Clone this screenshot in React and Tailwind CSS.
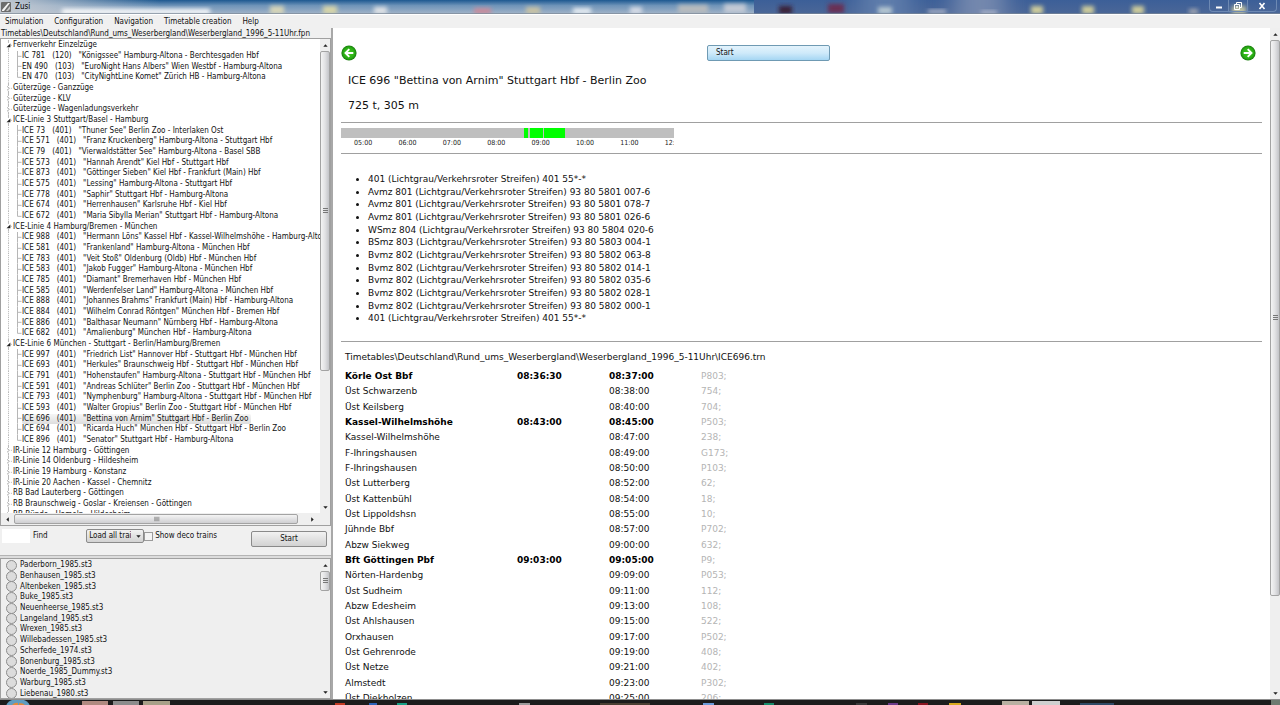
import React from 'react';

const menuItems = ['Simulation', 'Configuration', 'Navigation', 'Timetable creation', 'Help'];

const treeGroups = [
  {
    name: 'Fernverkehr Einzelzüge',
    trains: [
      'IC 781  (120)  "Königssee" Hamburg-Altona - Berchtesgaden Hbf',
      'EN 490  (103)  "EuroNight Hans Albers" Wien Westbf - Hamburg-Altona',
      'EN 470  (103)  "CityNightLine Komet" Zürich HB - Hamburg-Altona',
    ],
  },
  { name: 'Güterzüge - Ganzzüge', trains: [] },
  { name: 'Güterzüge - KLV', trains: [] },
  { name: 'Güterzüge - Wagenladungsverkehr', trains: [] },
  {
    name: 'ICE-Linie 3 Stuttgart/Basel - Hamburg',
    trains: [
      'ICE 73  (401)  "Thuner See" Berlin Zoo - Interlaken Ost',
      'ICE 571  (401)  "Franz Kruckenberg" Hamburg-Altona - Stuttgart Hbf',
      'ICE 79  (401)  "Vierwaldstätter See" Hamburg-Altona - Basel SBB',
      'ICE 573  (401)  "Hannah Arendt" Kiel Hbf - Stuttgart Hbf',
      'ICE 873  (401)  "Göttinger Sieben" Kiel Hbf - Frankfurt (Main) Hbf',
      'ICE 575  (401)  "Lessing" Hamburg-Altona - Stuttgart Hbf',
      'ICE 778  (401)  "Saphir" Stuttgart Hbf - Hamburg-Altona',
      'ICE 674  (401)  "Herrenhausen" Karlsruhe Hbf - Kiel Hbf',
      'ICE 672  (401)  "Maria Sibylla Merian" Stuttgart Hbf - Hamburg-Altona',
    ],
  },
  {
    name: 'ICE-Linie 4 Hamburg/Bremen - München',
    trains: [
      'ICE 988  (401)  "Hermann Löns" Kassel Hbf - Kassel-Wilhelmshöhe - Hamburg-Altona',
      'ICE 581  (401)  "Frankenland" Hamburg-Altona - München Hbf',
      'ICE 783  (401)  "Veit Stoß" Oldenburg (Oldb) Hbf - München Hbf',
      'ICE 583  (401)  "Jakob Fugger" Hamburg-Altona - München Hbf',
      'ICE 785  (401)  "Diamant" Bremerhaven Hbf - München Hbf',
      'ICE 585  (401)  "Werdenfelser Land" Hamburg-Altona - München Hbf',
      'ICE 888  (401)  "Johannes Brahms" Frankfurt (Main) Hbf - Hamburg-Altona',
      'ICE 884  (401)  "Wilhelm Conrad Röntgen" München Hbf - Bremen Hbf',
      'ICE 886  (401)  "Balthasar Neumann" Nürnberg Hbf - Hamburg-Altona',
      'ICE 682  (401)  "Amalienburg" München Hbf - Hamburg-Altona',
    ],
  },
  {
    name: 'ICE-Linie 6 München - Stuttgart - Berlin/Hamburg/Bremen',
    trains: [
      'ICE 997  (401)  "Friedrich List" Hannover Hbf - Stuttgart Hbf - München Hbf',
      'ICE 693  (401)  "Herkules" Braunschweig Hbf - Stuttgart Hbf - München Hbf',
      'ICE 791  (401)  "Hohenstaufen" Hamburg-Altona - Stuttgart Hbf - München Hbf',
      'ICE 591  (401)  "Andreas Schlüter" Berlin Zoo - Stuttgart Hbf - München Hbf',
      'ICE 793  (401)  "Nymphenburg" Hamburg-Altona - Stuttgart Hbf - München Hbf',
      'ICE 593  (401)  "Walter Gropius" Berlin Zoo - Stuttgart Hbf - München Hbf',
      'ICE 696  (401)  "Bettina von Arnim" Stuttgart Hbf - Berlin Zoo',
      'ICE 694  (401)  "Ricarda Huch" München Hbf - Stuttgart Hbf - Berlin Zoo',
      'ICE 896  (401)  "Senator" Stuttgart Hbf - Hamburg-Altona',
    ],
  },
  { name: 'IR-Linie 12 Hamburg - Göttingen', trains: [] },
  { name: 'IR-Linie 14 Oldenburg - Hildesheim', trains: [] },
  { name: 'IR-Linie 19 Hamburg - Konstanz', trains: [] },
  { name: 'IR-Linie 20 Aachen - Kassel - Chemnitz', trains: [] },
  { name: 'RB Bad Lauterberg - Göttingen', trains: [] },
  { name: 'RB Braunschweig - Goslar - Kreiensen - Göttingen', trains: [] },
  { name: 'RB Bünde - Hameln - Hildesheim', trains: [] },
];

// flat list, one entry per visible tree row
const treeRows = treeGroups.flatMap((group) => [
  { label: group.name, open: group.trains.length > 0, level: 0 },
  ...group.trains.map((train, i) => ({
    label: train,
    level: 1,
    last: i === group.trains.length - 1,
    selected: train.startsWith('ICE 696'),
  })),
]);

const modules = [
  'Paderborn_1985.st3',
  'Benhausen_1985.st3',
  'Altenbeken_1985.st3',
  'Buke_1985.st3',
  'Neuenheerse_1985.st3',
  'Langeland_1985.st3',
  'Wrexen_1985.st3',
  'Willebadessen_1985.st3',
  'Scherfede_1974.st3',
  'Bonenburg_1985.st3',
  'Noerde_1985_Dummy.st3',
  'Warburg_1985.st3',
  'Liebenau_1980.st3',
];

const hours = ['05:00', '06:00', '07:00', '08:00', '09:00', '10:00', '11:00', '12:00'];

// percent of the axis
const runs = [
  { from: 55, to: 56.3 },
  { from: 56.7, to: 60.7 },
  { from: 61.1, to: 67.2 },
];

const vehicles = [
  '401 (Lichtgrau/Verkehrsroter Streifen) 401 55*-*',
  'Avmz 801 (Lichtgrau/Verkehrsroter Streifen) 93 80 5801 007-6',
  'Avmz 801 (Lichtgrau/Verkehrsroter Streifen) 93 80 5801 078-7',
  'Avmz 801 (Lichtgrau/Verkehrsroter Streifen) 93 80 5801 026-6',
  'WSmz 804 (Lichtgrau/Verkehrsroter Streifen) 93 80 5804 020-6',
  'BSmz 803 (Lichtgrau/Verkehrsroter Streifen) 93 80 5803 004-1',
  'Bvmz 802 (Lichtgrau/Verkehrsroter Streifen) 93 80 5802 063-8',
  'Bvmz 802 (Lichtgrau/Verkehrsroter Streifen) 93 80 5802 014-1',
  'Bvmz 802 (Lichtgrau/Verkehrsroter Streifen) 93 80 5802 035-6',
  'Bvmz 802 (Lichtgrau/Verkehrsroter Streifen) 93 80 5802 028-1',
  'Bvmz 802 (Lichtgrau/Verkehrsroter Streifen) 93 80 5802 000-1',
  '401 (Lichtgrau/Verkehrsroter Streifen) 401 55*-*',
];

const stops = [
  ['Körle Ost Bbf', '08:36:30', '08:37:00', 'P803;'],
  ['Üst Schwarzenb', '', '08:38:00', '754;'],
  ['Üst Keilsberg', '', '08:40:00', '704;'],
  ['Kassel-Wilhelmshöhe', '08:43:00', '08:45:00', 'P503;'],
  ['Kassel-Wilhelmshöhe', '', '08:47:00', '238;'],
  ['F-Ihringshausen', '', '08:49:00', 'G173;'],
  ['F-Ihringshausen', '', '08:50:00', 'P103;'],
  ['Üst Lutterberg', '', '08:52:00', '62;'],
  ['Üst Kattenbühl', '', '08:54:00', '18;'],
  ['Üst Lippoldshsn', '', '08:55:00', '10;'],
  ['Jühnde Bbf', '', '08:57:00', 'P702;'],
  ['Abzw Siekweg', '', '09:00:00', '632;'],
  ['Bft Göttingen Pbf', '09:03:00', '09:05:00', 'P9;'],
  ['Nörten-Hardenbg', '', '09:09:00', 'P053;'],
  ['Üst Sudheim', '', '09:11:00', '112;'],
  ['Abzw Edesheim', '', '09:13:00', '108;'],
  ['Üst Ahlshausen', '', '09:15:00', '522;'],
  ['Orxhausen', '', '09:17:00', 'P502;'],
  ['Üst Gehrenrode', '', '09:19:00', '408;'],
  ['Üst Netze', '', '09:21:00', '402;'],
  ['Almstedt', '', '09:23:00', 'P302;'],
  ['Üst Diekholzen', '', '09:25:00', '206;'],
];

// desktop icons shining through the glass title bar
const glassSpots = [
  { x: 62, w: 148, y: 9, h: 5, color: '#ffffff' },
  { x: 270, w: 14, y: 6, h: 8, color: '#d8d6b8' },
  { x: 323, w: 14, y: 6, h: 8, color: '#d8d6a8' },
  { x: 374, w: 13, y: 7, h: 7, color: '#e0e3e6' },
  { x: 474, w: 17, y: 8, h: 6, color: '#c98b9b' },
  { x: 526, w: 14, y: 7, h: 7, color: '#c9c3a4' },
  { x: 573, w: 18, y: 8, h: 6, color: '#e6edf3' },
  { x: 630, w: 12, y: 7, h: 7, color: '#d5dbe6' },
  { x: 678, w: 30, y: 5, h: 8, color: '#b9bcbd' },
  { x: 724, w: 22, y: 4, h: 9, color: '#c3cad5' },
  { x: 779, w: 13, y: 6, h: 8, color: '#3a2238' },
  { x: 828, w: 16, y: 4, h: 9, color: '#6b2f52' },
  { x: 878, w: 14, y: 7, h: 7, color: '#b7c8d2' },
  { x: 928, w: 18, y: 10, h: 3, color: '#c9cbd5' },
  { x: 981, w: 16, y: 11, h: 3, color: '#b9bfd0' },
  { x: 1031, w: 12, y: 6, h: 8, color: '#d0ce9b' },
  { x: 1082, w: 12, y: 6, h: 8, color: '#d0ce9b' },
  { x: 1132, w: 12, y: 6, h: 8, color: '#d0ce9b' },
  { x: 1189, w: 9, y: 9, h: 5, color: '#a5a9b2' },
  { x: 1232, w: 14, y: 6, h: 8, color: '#c6c6a2' },
];

const taskSpots = [
  { x: 335, w: 10, color: '#c23a22' },
  { x: 369, w: 8, color: '#2b62b8' },
  { x: 397, w: 10, color: '#16a085' },
  { x: 519, w: 11, color: '#9a9a9a' },
  { x: 600, w: 50, color: '#4a3f32' },
  { x: 703, w: 11, color: '#6a9ad8' },
  { x: 764, w: 10, color: '#168c6a' },
  { x: 856, w: 11, color: '#3a3a3a' },
  { x: 888, w: 10, color: '#6b3a8a' },
  { x: 918, w: 10, color: '#8a1420' },
  { x: 949, w: 12, color: '#d8a81c' },
  { x: 1080, w: 34, color: '#2f4a66' },
];

const TitleBar = () => (
  <header className="relative flex h-[14px] shrink-0 items-center justify-between overflow-hidden bg-[#45659a]">
    <svg className="absolute inset-0 h-full w-full" viewBox="0 0 1280 14" preserveAspectRatio="none" aria-hidden="true">
      <defs>
        <linearGradient id="glass" x1="0" x2="0" y1="0" y2="1">
          <stop offset="0" stopColor="#1d5890" />
          <stop offset="0.4" stopColor="#6f94b9" />
          <stop offset="1" stopColor="#a3b4c8" />
        </linearGradient>
        <linearGradient id="glassLeft" x1="0" x2="1">
          <stop offset="0" stopColor="#c5cbd3" />
          <stop offset="1" stopColor="#c5cbd3" stopOpacity="0" />
        </linearGradient>
        <linearGradient id="glassRight" x1="0" x2="0" y1="0" y2="1">
          <stop offset="0" stopColor="#3c5f98" />
          <stop offset="1" stopColor="#4b6797" />
        </linearGradient>
        <filter id="soft" x="-30%" y="-50%" width="160%" height="200%">
          <feGaussianBlur stdDeviation="2" />
        </filter>
        <filter id="softer" x="-50%" y="-50%" width="200%" height="200%">
          <feGaussianBlur stdDeviation="12 1" />
        </filter>
      </defs>
      <rect width="756" height="14" fill="url(#glass)" />
      <rect x="754" width="526" height="14" fill="url(#glassRight)" />
      <rect x="860" y="-6" width="50" height="26" fill="#5f7dab" filter="url(#softer)" />
      <rect x="955" y="-6" width="50" height="26" fill="#7488ae" filter="url(#softer)" />
      <rect width="160" height="14" fill="url(#glassLeft)" />
      {glassSpots.map((s) => (
        <rect key={s.x} x={s.x} y={s.y} width={s.w} height={s.h} fill={s.color} filter="url(#soft)" />
      ))}
      <path d="M0 13.500h1280" stroke="#7a8796" strokeOpacity="0.7" />
    </svg>
    <div className="relative flex items-center gap-1 pl-px">
      <svg width="10" height="10" viewBox="0 0 10 10" aria-hidden="true">
        <rect width="10" height="10" rx="1" fill="#6c6c6c" />
        <path d="M1 8 7 1h2L3 9H1z" fill="#f4f4f4" />
        <path d="M5 9 9 4v3L7 9z" fill="#c4c4c4" />
      </svg>
      <h1 className="text-[8px] leading-[12px] text-black">Zusi</h1>
    </div>
    <div className="relative flex h-[12px] self-start pr-[3px] text-white">
      <button aria-label="Minimize" className="flex w-[20px] items-center justify-center rounded-bl border border-t-0 border-[#6d89b3]">
        <svg width="8" height="10" viewBox="0 0 8 10"><path d="M1 6.500h6" stroke="currentColor" strokeWidth="2" /></svg>
      </button>
      <button aria-label="Restore" className="flex w-[18px] items-center justify-center border border-x-0 border-t-0 border-[#6d89b3]">
        <svg width="8" height="8" viewBox="0 0 8 8" fill="none" stroke="currentColor">
          <path d="M2.500 2V.5h5v5H6M.5 2.500h5v5h-5z" />
          <path d="M2.500 4.500h1v1h-1z" />
        </svg>
      </button>
      <button aria-label="Close" className="flex w-[30px] items-center justify-center rounded-br border border-t-0 border-[#6d89b3]">
        <svg width="8" height="8" viewBox="0 0 8 8"><path d="m1.500 1 5 6m0-6-5 6" stroke="currentColor" strokeWidth="1.600" /></svg>
      </button>
    </div>
  </header>
);

const Arrow = ({ className }) => (
  <svg className={className} width="5" height="5" viewBox="0 0 5 5" aria-hidden="true">
    <path d="M.3 3.800h4.400L2.500 1.300z" fill="#222" />
  </svg>
);

const Grip = ({ className }) => (
  <svg className={className} width="5" height="6" viewBox="0 0 5 6" aria-hidden="true">
    <path d="M0 .5h5M0 2.500h5M0 4.500h5" stroke="#777" />
  </svg>
);

// thumbClass sets how much of the track the thumb takes
const VerticalScrollbar = ({ thumbClass }) => (
  <div className="flex w-[10px] shrink-0 flex-col items-center bg-[#efefef]">
    <div className="flex h-[12px] w-full shrink-0 items-center justify-center">
      <Arrow />
    </div>
    <div className="flex min-h-0 w-full flex-1 flex-col">
      <div className={`flex w-full items-center justify-center rounded-xs border border-[#a3a3a3] bg-gradient-to-r from-[#f4f4f4] via-[#e2e2e4] to-[#c3c4c8] ${thumbClass}`}>
        <Grip />
      </div>
    </div>
    <div className="flex h-[12px] w-full shrink-0 items-center justify-center">
      <Arrow className="rotate-180" />
    </div>
  </div>
);

const TreeGuide = ({ row }) =>
  row.level === 1 ? (
    <svg className="h-full w-[21px] shrink-0" viewBox="0 0 21 11" preserveAspectRatio="none" fill="none" stroke="#b5b5b5" aria-hidden="true">
      <path d="M7.500 0v11" strokeDasharray="1 1" />
      <path d={row.last ? 'M16.500 0v5.500h4' : 'M16.500 0v11M16.500 5.500h4'} />
    </svg>
  ) : (
    <svg className="h-full w-[12px] shrink-0" viewBox="0 0 12 11" fill="none" aria-hidden="true">
      <path d="M7.500 0v3M7.500 8v3M10 5.500h1" stroke="#b5b5b5" />
      {row.open ? <path d="M5.500 7.500h4v-4z" fill="#222" /> : <path d="m6 3.500 2.500 2L6 7.500" stroke="#aaa" />}
    </svg>
  );

const TrainTree = () => (
  <div className="flex min-h-0 flex-1 flex-col border border-[#a0a0a0] bg-white">
    <div className="flex min-h-0 flex-1 overflow-hidden">
      <ul className="mt-px grid h-[480px] min-w-0 flex-1 auto-rows-fr self-start">
        {treeRows.map((row) => (
          <li key={row.label} className="flex min-h-0 items-center overflow-hidden">
            <TreeGuide row={row} />
            <span
              className={`flex gap-[7px] whitespace-nowrap leading-[10px] ${
                row.selected ? 'rounded-xs bg-gradient-to-b from-[#f6f6f6] to-[#dedede] pr-[3px]' : ''
              }`}
            >
              {row.label.split('  ').map((part) => (
                <span key={part}>{part}</span>
              ))}
            </span>
          </li>
        ))}
      </ul>
      <VerticalScrollbar thumbClass="h-[71%]" />
    </div>
    <div className="flex h-[12px] shrink-0 items-center bg-[#efefef] pr-[11px]">
      <Arrow className="mx-[4px] -rotate-90" />
      <div className="flex h-[10px] flex-1 items-center justify-center rounded-xs border border-[#a3a3a3] bg-gradient-to-b from-[#f4f4f4] to-[#cfcfd2]">
        <Grip className="rotate-90" />
      </div>
      <Arrow className="ml-[12px] mr-[4px] rotate-90" />
    </div>
  </div>
);

const SearchBar = () => (
  <div className="flex h-[29px] shrink-0 items-start pr-[4px] pt-[3px]">
    <input id="find" type="text" className="ml-[2px] h-[14px] w-[28px] bg-white px-1" />
    <label htmlFor="find" className="ml-[3px] leading-[14px]">Find</label>
    <div className="relative ml-auto">
      <select
        aria-label="Trains to load"
        className="h-[14px] w-[58px] appearance-none rounded-xs border border-[#8a8a8a] bg-gradient-to-b from-[#f2f2f2] to-[#d2d2d2] pl-[2px] pr-[12px]"
      >
        <option>Load all trai</option>
      </select>
      <Arrow className="pointer-events-none absolute right-[3px] top-[5px] rotate-180" />
    </div>
    <label className="flex h-[14px] items-center gap-[2px]">
      <input type="checkbox" className="h-[9px] w-[9px] appearance-none border border-[#9a9a9a] bg-[#f4f4f4]" />
      Show deco trains
    </label>
    <button className="ml-[34px] mt-[2px] h-[16px] w-[76px] rounded-xs border border-[#8a8a8a] bg-gradient-to-b from-[#f2f2f2] to-[#d2d2d2]">
      Start
    </button>
  </div>
);

const ModuleList = () => (
  <div className="flex h-[141px] shrink-0 overflow-hidden border border-[#a0a0a0] bg-[#efefef]">
    <ul className="mt-px grid h-[139px] flex-1 shrink-0 auto-rows-fr pl-[5px]">
      {modules.map((name) => (
        <li key={name} className="flex min-h-0 items-center gap-[3px]">
          <svg width="11" height="11" viewBox="0 0 11 11" className="shrink-0" aria-hidden="true">
            <circle cx="5.500" cy="5.500" r="5" fill="#dcdcdc" stroke="#8c8c8c" />
          </svg>
          <span className="leading-[10px]">{name}</span>
        </li>
      ))}
    </ul>
    <VerticalScrollbar thumbClass="h-[20px]" />
  </div>
);

const NavButton = ({ label, back }) => (
  <button aria-label={label}>
    <svg width="16" height="16" viewBox="0 0 16 16" className={back ? '' : 'rotate-180'}>
      <defs>
        <radialGradient id="orb" cx="0.5" cy="0.5" r="0.5">
          <stop offset="0" stopColor="#3ecb1c" />
          <stop offset="0.7" stopColor="#2bb015" />
          <stop offset="1" stopColor="#177a0d" />
        </radialGradient>
      </defs>
      <circle cx="8" cy="8" r="7.600" fill="url(#orb)" />
      <path d="M8.300 4.200 4.500 8l3.800 3.800M5 8h7.300" fill="none" stroke="#fff" strokeWidth="1.900" />
    </svg>
  </button>
);

const Timeline = () => (
  <div className="w-[333px] overflow-hidden">
    <div className="relative h-[10px] bg-[#bfbfbf]">
      {runs.map((run) => (
        <div
          key={run.from}
          className="absolute inset-y-0 bg-[#00ff00]"
          style={{ left: `${run.from}%`, width: `${run.to - run.from}%` }}
        />
      ))}
    </div>
    <div className="grid w-[355px] grid-cols-8 text-center font-['DejaVu_Sans_Condensed'] text-[7px] leading-[10px] text-[#222]">
      {hours.map((hour) => (
        <span key={hour}>{hour}</span>
      ))}
    </div>
  </div>
);

const TrainDetails = () => (
  <main className="flex min-w-0 flex-1 bg-white font-['DejaVu_Sans'] text-[9px] text-[#111]">
    <div className="min-w-0 flex-1 overflow-hidden pl-[8px] pr-[8px] pt-[17px]">
      <div className="flex items-center justify-between pr-[6px]">
        <NavButton label="Previous train" back />
        <button className="mr-[60px] h-[16px] w-[123px] rounded-xs border border-[#6f9ab3] bg-gradient-to-b from-[#e3f3fc] via-[#cfeafa] to-[#a5d6f3] pl-[8px] text-left font-['DejaVu_Sans_Condensed'] text-[8px] leading-[12px]">
          Start
        </button>
        <NavButton label="Next train" />
      </div>

      <div className="mt-[12px] space-y-[10px] pl-[7px] text-[11px] leading-[15px]">
        <h2>ICE 696 &quot;Bettina von Arnim&quot; Stuttgart Hbf - Berlin Zoo</h2>
        <p>725 t, 305 m</p>
      </div>

      <hr className="mb-[5px] mt-[9px] border-[#a0a0a0]" />
      <Timeline />
      <hr className="mt-[5px] border-[#a0a0a0]" />

      <ul className="mt-[19px] grid h-[152px] auto-rows-fr list-disc pl-[27px]">
        {vehicles.map((vehicle, i) => (
          <li key={i} className="leading-[12px]">{vehicle}</li>
        ))}
      </ul>

      <hr className="mt-[16px] border-[#a0a0a0]" />

      <p className="mt-[9px] pl-[4px] leading-[12px]">
        Timetables\Deutschland\Rund_ums_Weserbergland\Weserbergland_1996_5-11Uhr\ICE696.trn
      </p>

      <table className="ml-[4px] mt-[6px] table-fixed text-left leading-[15px]">
        <colgroup>
          <col className="w-[172px]" />
          <col className="w-[92px]" />
          <col className="w-[92px]" />
          <col className="w-[60px]" />
        </colgroup>
        <tbody>
          {stops.map(([station, arrival, departure, signal]) => (
            <tr key={departure} className={`h-[15px] nth-[3n]:h-[16px] ${arrival ? 'font-bold text-black' : ''}`}>
              <td>{station}</td>
              <td>{arrival}</td>
              <td>{departure}</td>
              <td className="font-normal text-[#b4b4b4]">{signal}</td>
            </tr>
          ))}
        </tbody>
      </table>
    </div>
    <VerticalScrollbar thumbClass="h-[86%]" />
  </main>
);

const Taskbar = () => (
  <footer className="relative flex h-[6px] shrink-0 overflow-hidden border-t border-[#8d8d8d] bg-[#1c1c1c]">
    <svg className="h-full w-full" viewBox="0 0 1280 5" preserveAspectRatio="none" aria-hidden="true">
      <ellipse cx="18" cy="7" rx="12" ry="8" fill="#5f9cc0" />
      <path d="M12 5q3-3 6-2v2zM19 3q4 0 6 2h-6z" fill="#e08a3a" />
      <rect x="82" y="1" width="26" height="4" fill="#b08a80" />
      <rect x="113" y="1" width="26" height="4" fill="#8c8c8c" />
      <rect x="143" y="1" width="27" height="4" fill="#a8a088" />
      {taskSpots.map((s) => (
        <rect key={s.x} x={s.x} y="3" width={s.w} height="2" fill={s.color} />
      ))}
      <rect x="1002" y="1" width="27" height="4" fill="#b9b0a2" />
      <rect x="1032" y="1" width="28" height="4" fill="#cfcfcf" />
      <rect x="1271" y="0" width="9" height="5" fill="#6d7a70" />
    </svg>
  </footer>
);

const App = () => {
  return (
    <div className="flex h-screen flex-col overflow-hidden bg-[#f0f0f0] font-['DejaVu_Sans_Condensed','DejaVu_Sans',sans-serif] text-[8px] text-[#111]">
      <TitleBar />
      <nav className="flex h-[14px] shrink-0 items-center gap-[11px] border-t border-white pl-[5px] pt-px">
        {menuItems.map((item) => (
          <button key={item} className="leading-[12px]">{item}</button>
        ))}
      </nav>

      <div className="flex min-h-0 flex-1">
        <aside className="flex w-[333px] shrink-0 flex-col border-r-2 border-[#a8a8a8]">
          <p className="h-[10px] shrink-0 whitespace-nowrap pl-px leading-[12px]">
            Timetables\Deutschland\Rund_ums_Weserbergland\Weserbergland_1996_5-11Uhr.fpn
          </p>
          <TrainTree />
          <SearchBar />
          <div className="h-[3px] shrink-0 border-t border-[#b4b4b4] bg-[#dcdcdc]" />
          <ModuleList />
        </aside>
        <TrainDetails />
      </div>

      <Taskbar />
    </div>
  );
};

export default App;
